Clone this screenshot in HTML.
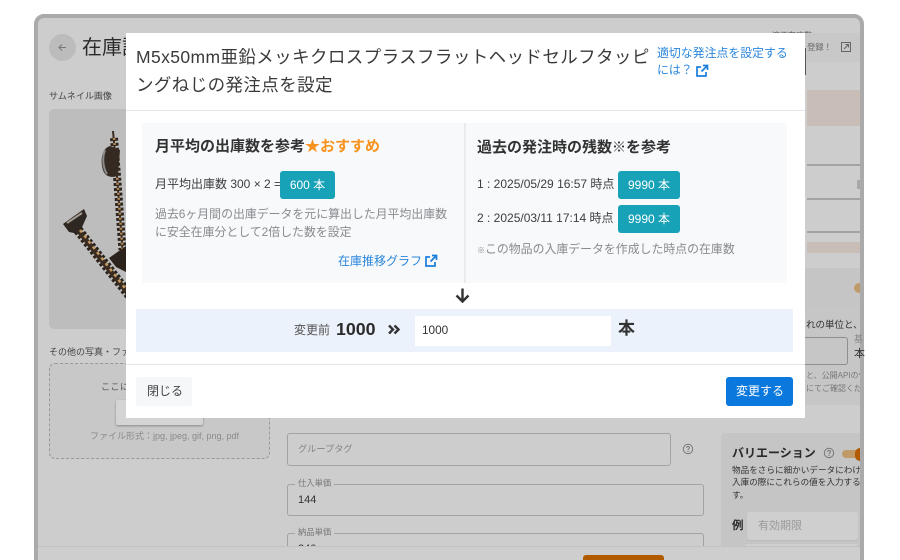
<!DOCTYPE html>
<html lang="ja"><head><meta charset="utf-8">
<style>
html,body{margin:0;padding:0;background:#fff;overflow:hidden;width:900px;height:560px}
#w{width:900px;height:560px;position:relative;overflow:hidden;font-family:"Liberation Sans","Noto Sans CJK JP",sans-serif;color:#333}
.a{position:absolute;white-space:nowrap}
.b{position:absolute;box-sizing:border-box}
.badge{position:absolute;background:#17a2b8;color:#fff;border-radius:3px;font-size:12px;line-height:28px;height:28px;text-align:center}
</style></head><body><div id="w">
<!-- dim frame -->
<div class="b" style="left:34px;top:14px;width:830px;height:560px;background:#cdcdcd;border:4px solid #aaa;border-radius:10px"></div>
<div class="b" style="left:805px;top:33px;width:55px;height:29px;background:#c8c8c8"></div>
<!-- left bg -->
<div class="b" style="left:49px;top:34px;width:27px;height:27px;border-radius:50%;background:#bcbcbc"></div>
<svg class="a" style="left:56px;top:41px" width="13" height="13" viewBox="0 0 13 13"><path d="M10 6.500H3M6 3.500L3 6.500L6 9.500" fill="none" stroke="#777" stroke-width="1"/></svg>
<div class="a" style="left:82px;top:34px;font-size:20px;line-height:28px;color:#2a2a2a">在庫詳細</div>
<div class="a" style="left:49px;top:89px;font-size:9px;line-height:14px;color:#444">サムネイル画像</div>
<div class="b" style="left:49px;top:109px;width:100px;height:220px;background:#bdbdbd;border-radius:5px"></div>
<svg class="a" style="left:49px;top:109px" width="90" height="220" viewBox="49 109 90 220">
<path d="M113 131L117 176L123 256" stroke="#3a2c20" stroke-width="2" fill="none"/>
<path d="M114 138L117 176L122.500 250" stroke="#2e241b" stroke-width="8" stroke-dasharray="3 2" fill="none"/>
<path d="M114 138L117 176L122.500 250" stroke="#b58a55" stroke-width="2.500" stroke-dasharray="2 3" fill="none"/>
<path d="M110 146C102 148 100 160 103 170C105 177 112 178 118 176L120 150Z" fill="#352a22"/>
<path d="M105 150C102 158 103 168 107 174" stroke="#8b8b8b" stroke-width="2" fill="none"/>
<path d="M109 258L126 246V272L116 267Z" fill="#2c241c"/>
<path d="M63 224L84 209L87 216L79 234L69 232Z" fill="#2f2721"/>
<path d="M67 223L82 213" stroke="#a09a90" stroke-width="2"/>
<path d="M78 230L130 296" stroke="#2b221a" stroke-width="10" stroke-dasharray="3 2" fill="none"/>
<path d="M78 230L130 296" stroke="#3a2c20" stroke-width="5" fill="none"/>
<path d="M80 230L128 292" stroke="#c49a62" stroke-width="2.500" stroke-dasharray="3 4" fill="none"/>
</svg>
<div class="a" style="left:49px;top:345px;font-size:9px;line-height:14px;color:#444">その他の写真・ファイル</div>
<div class="b" style="left:49px;top:363px;width:221px;height:96px;border:1px dashed #999;border-radius:6px;background:#c8c8c8"></div>
<div class="a" style="left:101px;top:380px;font-size:9px;line-height:14px;letter-spacing:.5px;color:#555">ここにファイル</div>
<div class="b" style="left:116px;top:400px;width:87px;height:25px;background:#d4d4d4;border-radius:2px;box-shadow:0 1px 2px #888"></div>
<div class="a" style="left:90px;top:429px;font-size:9px;line-height:14px;color:#8a8a8a">ファイル形式：jpg, jpeg, gif, png, pdf</div>
<!-- middle bg -->
<div class="b" style="left:287px;top:433px;width:384px;height:33px;border:1px solid #a3a3a3;border-radius:3px"></div>
<div class="a" style="left:298px;top:442px;font-size:9.200px;line-height:15px;color:#858585">グループタグ</div>
<svg class="a" style="left:682px;top:443px" width="12" height="12" viewBox="0 0 12 12"><circle cx="6" cy="6" r="4.700" fill="none" stroke="#777"/><path d="M4.600 4.800C4.600 3 7.400 3 7.400 4.800C7.400 6 6 5.800 6 7.200" fill="none" stroke="#777"/><circle cx="6" cy="8.600" r=".6" fill="#777"/></svg>
<div class="b" style="left:287px;top:484px;width:417px;height:32px;border:1px solid #a3a3a3;border-radius:3px"></div>
<div class="a" style="left:295px;top:476px;font-size:8.300px;line-height:14px;color:#777;background:#cdcdcd;padding:0 3px">仕入単価</div>
<div class="a" style="left:298px;top:492px;font-size:11px;line-height:16px;color:#333">144</div>
<div class="b" style="left:287px;top:533px;width:417px;height:32px;border:1px solid #a3a3a3;border-radius:3px"></div>
<div class="a" style="left:295px;top:525px;font-size:8.300px;line-height:14px;color:#777;background:#cdcdcd;padding:0 3px">納品単価</div>
<div class="a" style="left:298px;top:541px;font-size:11px;line-height:16px;color:#333">240</div>
<!-- right bg -->
<div class="a" style="left:772px;top:30px;height:3px;overflow:hidden;font-size:8px;line-height:12px;color:#555">適正在庫数</div>
<div class="a" style="left:807px;top:40px;font-size:8.300px;line-height:15px;color:#666">登録！</div>
<svg class="a" style="left:841px;top:42px" width="10" height="10" viewBox="0 0 10 10"><path d="M.5.500H9.500V9.500H.5ZM3 7L7.500 2.500M4.500 2.500H7.500V5.500" fill="none" stroke="#666" stroke-width="1"/></svg>
<div class="b" style="left:805px;top:48px;width:1px;height:27px;background:#555"></div>
<div class="b" style="left:807px;top:90px;width:53px;height:36px;background:#c9bdb7"></div>
<div class="b" style="left:807px;top:164px;width:53px;height:2px;background:#a3a3a3"></div>
<div class="b" style="left:807px;top:198px;width:53px;height:2px;background:#a3a3a3"></div>
<div class="b" style="left:807px;top:231px;width:53px;height:2px;background:#a3a3a3"></div>
<div class="b" style="left:807px;top:242px;width:53px;height:11px;background:#c9bdb7"></div>
<div class="b" style="left:857px;top:180px;width:3px;height:9px;background:#a8a8a8"></div>
<div class="b" style="left:805px;top:268px;width:55px;height:40px;background:#c5c5c5"></div>
<div class="b" style="left:854px;top:283px;width:6px;height:10px;background:#c09a68;border-radius:5px 0 0 5px"></div>
<div class="b" style="left:805px;top:308px;width:55px;height:97px;background:#c6c6c6"></div>
<div class="a" style="left:806px;top:318px;width:54px;overflow:hidden;font-size:9.500px;line-height:15px;color:#333">れの単位と、指</div>
<div class="b" style="left:790px;top:337px;width:58px;height:28px;border:1px solid #8f8f8f;border-radius:3px"></div>
<div class="a" style="left:854px;top:333px;font-size:9px;line-height:12px;color:#888">基</div>
<div class="a" style="left:854px;top:346px;font-size:11px;line-height:16px;color:#333">本</div>
<div class="a" style="left:806px;top:370px;width:54px;overflow:hidden;font-size:8px;line-height:12px;color:#777">と、公開APIの使</div>
<div class="a" style="left:806px;top:383px;width:54px;overflow:hidden;font-size:8px;line-height:12px;color:#777">にてご確認くださ</div>
<div class="b" style="left:721px;top:433px;width:139px;height:127px;background:#c5c5c5;border-radius:5px 0 0 0"></div>
<div class="a" style="left:732px;top:444px;font-size:12px;line-height:18px;font-weight:700;color:#2a2a2a">バリエーション</div>
<svg class="a" style="left:823px;top:447px" width="12" height="12" viewBox="0 0 12 12"><circle cx="6" cy="6" r="4.700" fill="none" stroke="#777"/><path d="M4.600 4.800C4.600 3 7.400 3 7.400 4.800C7.400 6 6 5.800 6 7.200" fill="none" stroke="#777"/><circle cx="6" cy="8.600" r=".6" fill="#777"/></svg>
<div class="b" style="left:842px;top:450px;width:18px;height:8px;background:#c09a68;border-radius:4px 0 0 4px"></div>
<div class="b" style="left:855px;top:448px;width:5px;height:13px;background:#b25a00;border-radius:7px 0 0 7px"></div>
<div class="a" style="left:732px;top:464px;width:128px;overflow:hidden;font-size:8.600px;line-height:12.300px;color:#333">物品をさらに細かいデータにわけ<br>入庫の際にこれらの値を入力する<br>す。</div>
<div class="a" style="left:732px;top:516px;font-size:11.500px;line-height:20px;font-weight:700;color:#2a2a2a">例</div>
<div class="b" style="left:747px;top:512px;width:111px;height:28px;background:#cfcfcf;border-radius:3px;box-shadow:0 1px 1px #bbb"></div>
<div class="a" style="left:758px;top:518px;font-size:11px;line-height:16px;color:#9a9a9a">有効期限</div>
<div class="b" style="left:745px;top:544px;width:112px;height:10px;background:#cfcfcf"></div>
<!-- footer -->
<div class="b" style="left:38px;top:546px;width:822px;height:14px;background:#cecece;border-top:1px solid #c2c2c2"></div>
<div class="b" style="left:583px;top:555px;width:81px;height:8px;background:#b25a00;border-radius:3px 3px 0 0"></div>

<!-- modal -->
<div class="b" style="left:126px;top:33px;width:679px;height:385px;background:#fff"></div>
<div class="a" style="left:136px;top:43px;font-size:17.500px;line-height:28px;color:#3a3a3a;letter-spacing:.4px">M5x50mm亜鉛メッキクロスプラスフラットヘッドセルフタッピ<br>ングねじの発注点を設定</div>
<div class="a" style="left:657px;top:45px;font-size:11.900px;line-height:17px;color:#2b86dc">適切な発注点を設定する<br>には？</div>
<svg class="a" style="left:695px;top:64px" width="14" height="14" viewBox="0 0 14 14"><path d="M6 3H2V12H11V8M8 1.500H12.500V6M12.500 1.500L6.500 7.500" fill="none" stroke="#1a7fdc" stroke-width="1.700"/></svg>
<div class="b" style="left:126px;top:110px;width:679px;height:1px;background:#e6e9ec"></div>

<div class="b" style="left:142px;top:123px;width:645px;height:160px;background:#f7f9fb"></div>
<div class="b" style="left:464px;top:123px;width:2px;height:160px;background:#e9ebee"></div>
<div class="a" style="left:155px;top:137px;font-size:15px;line-height:20px;font-weight:700;color:#333">月平均の出庫数を参考<span style="color:#f7931e">★おすすめ</span></div>
<div class="a" style="left:155px;top:175px;font-size:12px;line-height:18px;color:#3d3d3d">月平均出庫数 300 × 2 =</div>
<div class="badge" style="left:280px;top:171px;width:55px">600 本</div>
<div class="a" style="left:155px;top:205px;font-size:11.900px;line-height:18px;color:#888c8f">過去6ヶ月間の出庫データを元に算出した月平均出庫数<br>に安全在庫分として2倍した数を設定</div>
<div class="a" style="left:338px;top:252px;font-size:12px;line-height:18px;color:#2b86dc">在庫推移グラフ</div>
<svg class="a" style="left:424px;top:254px" width="14" height="14" viewBox="0 0 14 14"><path d="M6 3H2V12H11V8M8 1.500H12.500V6M12.500 1.500L6.500 7.500" fill="none" stroke="#1a7fdc" stroke-width="1.700"/></svg>

<div class="a" style="left:477px;top:137px;font-size:15px;line-height:20px;font-weight:700;color:#333">過去の発注時の残数<span style="font-size:14px">※</span>を参考</div>
<div class="a" style="left:477px;top:175px;font-size:12px;line-height:18px;color:#3d3d3d">1 : 2025/05/29 16:57 時点</div>
<div class="badge" style="left:618px;top:171px;width:62px">9990 本</div>
<div class="a" style="left:477px;top:209px;font-size:12px;line-height:18px;color:#3d3d3d">2 : 2025/03/11 17:14 時点</div>
<div class="badge" style="left:618px;top:205px;width:62px">9990 本</div>
<div class="a" style="left:477px;top:240px;font-size:11.900px;line-height:18px;color:#888c8f"><span style="font-size:8px">※</span>この物品の入庫データを作成した時点の在庫数</div>

<svg class="a" style="left:454px;top:287px" width="17" height="17" viewBox="0 0 17 17"><path d="M8.500 1.500V14.500M2.500 8.500L8.500 14.500L14.500 8.500" fill="none" stroke="#333" stroke-width="2.400"/></svg>

<div class="b" style="left:136px;top:309px;width:657px;height:43px;background:#ecf2fb"></div>
<div class="a" style="left:294px;top:321px;font-size:12px;line-height:18px;color:#555">変更前</div>
<div class="a" style="left:336px;top:319px;font-size:17.800px;line-height:20px;font-weight:700;color:#2c2c2c">1000</div>
<svg class="a" style="left:387px;top:323px" width="14" height="13" viewBox="0 0 14 13"><path d="M2 2.500L6 6.500L2 10.500M7.500 2.500L11.500 6.500L7.500 10.500" fill="none" stroke="#333" stroke-width="2.400"/></svg>
<div class="b" style="left:415px;top:316px;width:196px;height:30px;background:#fff"></div>
<div class="a" style="left:422px;top:322px;font-size:11.800px;line-height:17px;color:#333">1000</div>
<div class="a" style="left:618px;top:318px;font-size:17px;line-height:22px;font-weight:700;color:#333">本</div>

<div class="b" style="left:126px;top:364px;width:679px;height:1px;background:#e3e7ec"></div>
<div class="b" style="left:136px;top:377px;width:56px;height:29px;background:#f6f7f9;border-radius:3px"></div>
<div class="a" style="left:147px;top:381px;font-size:12px;line-height:20px;color:#444">閉じる</div>
<div class="b" style="left:726px;top:377px;width:67px;height:29px;background:#0a78dc;border-radius:3px"></div>
<div class="a" style="left:736px;top:381px;font-size:12px;line-height:20px;color:#fff">変更する</div>
</div></body></html>
